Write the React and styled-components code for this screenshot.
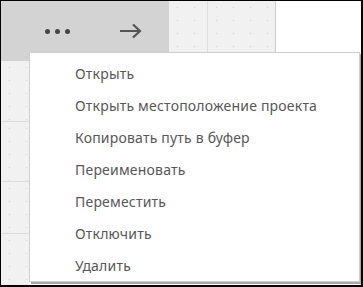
import React from 'react'
import styled, { createGlobalStyle } from 'styled-components'

const GlobalStyle = createGlobalStyle`
  html, body {
    margin: 0;
    padding: 0;
    background: #ffffff;
  }
`;

const Frame = styled.div`
  position: relative;
  width: 363px;
  height: 287px;
  box-sizing: border-box;
  border-style: solid;
  border-color: #000;
  border-width: 1px 2px 2px 1px;
  overflow: hidden;
  background: #ffffff;
  font-family: "Segoe UI", "Noto Sans", sans-serif;
`;

const dotted = `
  background-color: #f0f1f0;
  background-image: radial-gradient(circle, #dadcda 0.7px, transparent 1.1px);
  background-size: 17px 13px;
`;

const TopRow = styled.div`
  display: flex;
  height: 60px;
`;

const Toolbar = styled.div`
  width: 168px;
  background: #d3d3d3;
  display: flex;
  align-items: center;
  padding-left: 44px;
  box-sizing: border-box;
  gap: 49px;
`;

const Dots = styled.div`
  display: flex;
  gap: 5px;
`;

const Dot = styled.span`
  width: 5px;
  height: 5px;
  border-radius: 50%;
  background: #444;
`;

const Tile = styled.div`
  width: ${p => p.$w}px;
  border-right: 1px solid ${p => p.$line};
  ${dotted}
`;

const Row = styled.div`
  display: flex;
  height: ${p => p.$h}px;
  border-bottom: 1px solid #dcdcdc;
`;

const Cell = styled.div`
  width: 28px;
  ${dotted}
`;

const Menu = styled.ul`
  position: absolute;
  left: 28px;
  top: 51px;
  width: 331px;
  margin: 0;
  padding: 4px 0 0;
  list-style: none;
  box-sizing: border-box;
  height: 230px;
  background: #fff;
  border: 1px solid #cfcfcf;
  box-shadow: 2px 2px 0 #a8a8a8;
`;

const Item = styled.li`
  height: 32px;
  display: flex;
  align-items: center;
  padding-left: 45px;
  font-size: 14px;
  letter-spacing: 0.2px;
  color: #575757;
  white-space: nowrap;
`;

const items = [
  'Открыть',
  'Открыть местоположение проекта',
  'Копировать путь в буфер',
  'Переименовать',
  'Переместить',
  'Отключить',
  'Удалить',
]

const App = () => {
  return (
    <>
      <GlobalStyle />
      <Frame>
        <TopRow>
          <Toolbar>
            <Dots><Dot /><Dot /><Dot /></Dots>
            <svg width="23" height="16" viewBox="0 0 23 16">
              <path d="M1 8 H21 M14 1.5 L21 8 L14 14.5" fill="none" stroke="#555" strokeWidth="2.2" />
            </svg>
          </Toolbar>
          <Tile $w={38} $line="#dedede" />
          <Tile $w={67} $line="#cccccc" />
        </TopRow>
        <Row $h={60}><Cell /></Row>
        <Row $h={59}><Cell /></Row>
        <Row $h={51}><Cell /></Row>
        <Row $h={60}><Cell /></Row>
        <Menu>
          {items.map(t => <Item key={t}>{t}</Item>)}
        </Menu>
      </Frame>
    </>
  )
}

export default App
